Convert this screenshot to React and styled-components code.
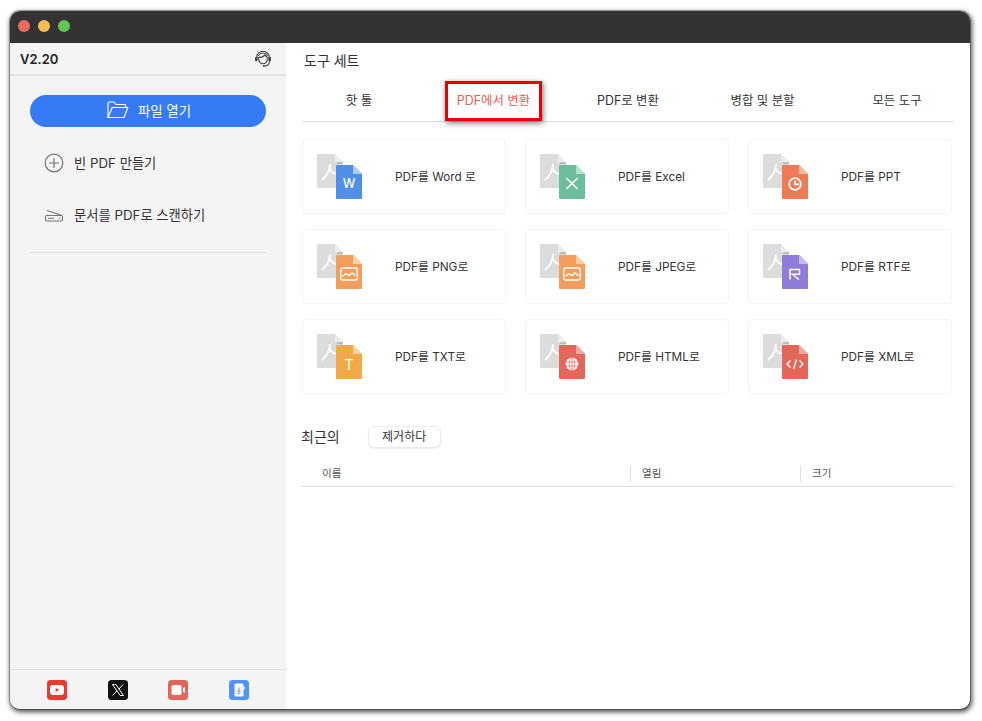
import React from 'react';
import styled, { createGlobalStyle } from 'styled-components';

const GlobalStyle = createGlobalStyle`
  html, body {
    margin: 0;
    padding: 0;
    background: #ffffff;
  }
  body {
    font-family: 'Inter', 'Noto Sans CJK KR', sans-serif;
    color: #333333;
  }
  * {
    box-sizing: border-box;
  }
`;

const Page = styled.div`
  width: 982px;
  height: 721px;
  padding: 11px 0 0 10px;
  overflow: hidden;
`;

const Window = styled.div`
  width: 960px;
  height: 698px;
  border-radius: 10px;
  overflow: hidden;
  display: flex;
  flex-direction: column;
  background: #ffffff;
  box-shadow: 0 0 0 1px rgba(0, 0, 0, 0.25), 1px 2px 5px 1px rgba(0, 0, 0, 0.7);
`;

const TitleBar = styled.div`
  height: 32px;
  flex: none;
  background: #333333;
  display: flex;
  align-items: center;
  gap: 8px;
  padding: 0 0 3px 8px;
`;

const Light = styled.span`
  width: 12px;
  height: 12px;
  border-radius: 50%;
  background: ${props => props.$color};
`;

const Body = styled.div`
  flex: 1;
  display: flex;
  min-height: 0;
`;

const Sidebar = styled.aside`
  width: 276px;
  flex: none;
  background: #f4f4f4;
  display: flex;
  flex-direction: column;
`;

const SideHeader = styled.div`
  height: 33px;
  flex: none;
  border-bottom: 2px solid #e2e2e2;
  display: flex;
  align-items: center;
  justify-content: space-between;
  padding: 0 14px 0 10px;
  font-size: 13px;
  font-weight: 600;
  color: #222222;
`;

const OpenButton = styled.button`
  width: 236px;
  height: 32px;
  margin: 19px 0 0 20px;
  border: 0;
  border-radius: 16px;
  background: #367bf5;
  color: #ffffff;
  font: inherit;
  font-size: 13.4px;
  display: flex;
  align-items: center;
  justify-content: center;
  gap: 9px;
  padding: 0 0 2px 2px;
`;

const SideList = styled.div`
  display: flex;
  flex-direction: column;
  gap: 32px;
  margin-top: 26px;
  padding-left: 34px;
`;

const SideItem = styled.div`
  height: 20px;
  display: flex;
  align-items: center;
  gap: 10px;
  font-size: 13.3px;
  color: #333333;
`;

const SideLabel = styled.span`
  position: relative;
  top: -1px;
`;

const SideDivider = styled.div`
  height: 1px;
  margin: 27px 20px 0;
  background: #dddddd;
`;

const SideFooter = styled.div`
  margin-top: auto;
  height: 40px;
  border-top: 1px solid #dedede;
  display: flex;
  align-items: flex-start;
  gap: 40.67px;
  padding: 10px 0 0 37px;
`;

const Main = styled.main`
  flex: 1;
  padding: 8px 16px 0;
  min-width: 0;
`;

const Title = styled.h1`
  margin: 0 0 0 2px;
  height: 20px;
  line-height: 20px;
  font-size: 14px;
  font-weight: 400;
  color: #333333;
`;

const TabRow = styled.div`
  position: relative;
  margin-top: 8px;
  height: 43px;
  width: 652px;
  border-bottom: 1px solid #dcdcdc;
  display: flex;
  justify-content: space-between;
`;

const Tab = styled.div`
  width: 114px;
  text-align: center;
  line-height: 44px;
  font-size: 12.4px;
  color: ${props => (props.$active ? '#e8604f' : '#333333')};
`;

const Highlight = styled.div`
  position: absolute;
  left: 143px;
  top: 2px;
  width: 97px;
  height: 40px;
  border: 3px solid #e80000;
  box-shadow: 1px 2px 6px rgba(0, 0, 0, 0.55);
`;

const ToolGrid = styled.div`
  display: grid;
  grid-template-columns: repeat(3, 204px);
  grid-auto-rows: 75px;
  gap: 15px 19px;
  margin-top: 17px;
`;

const ToolCard = styled.div`
  border: 1px solid #f4f4f4;
  border-radius: 4px;
  background: #ffffff;
  display: flex;
  align-items: center;
  padding-left: 14px;
  gap: 32px;
  font-size: 11.8px;
  color: #333333;
  white-space: nowrap;
`;

const ToolLabel = styled.span`
  position: relative;
  top: -1px;
`;

const RecentBar = styled.div`
  display: flex;
  align-items: center;
  height: 21px;
  margin: 32px 0 0 -1px;
  gap: 29px;
  font-size: 14px;
  line-height: 20px;
  color: #333333;
`;

const ClearButton = styled.button`
  width: 71px;
  height: 20px;
  border: 0;
  border-radius: 5px;
  background: #ffffff;
  box-shadow: 0 0 0 1px #ececec, 0 1px 2px rgba(0, 0, 0, 0.2);
  font: inherit;
  font-size: 12px;
  color: #333333;
  padding: 0 0 1px;
`;

const RecentHead = styled.div`
  display: grid;
  grid-template-columns: 329px 170px 1fr;
  width: 653px;
  height: 26px;
  margin: 14px 0 0 -1px;
  border-bottom: 1px solid #e2e2e2;
  align-items: center;
  font-size: 10.5px;
  color: #555555;
`;

const HeadCell = styled.div`
  height: 16px;
  line-height: 16px;
  padding-left: ${props => (props.$first ? '21px' : '11px')};
  border-left: ${props => (props.$first ? '0' : '1px solid #dddddd')};
`;

const FolderIcon = () => (
  <svg width="22" height="18" viewBox="0 0 22 18" fill="none" stroke="#fff" strokeWidth="1.2" strokeLinejoin="round">
    <path d="M1 16V2.500C1 1.700 1.600 1 2.500 1H7l2 2.500h8.500c.8 0 1.200.5 1.200 1.200V6" />
    <path d="M1 16.500h16l3.800-10H5.200L1 16.500z" />
  </svg>
);

const PlusIcon = () => (
  <svg width="20" height="20" viewBox="0 0 20 20" fill="none" stroke="#757575" strokeWidth="1.2">
    <circle cx="10" cy="10" r="8.800" />
    <path d="M10 5v10M5 10h10" />
  </svg>
);

const ScanIcon = () => (
  <svg width="20" height="20" viewBox="0 0 20 20" fill="none" stroke="#757575" strokeWidth="1.1" strokeLinejoin="round">
    <path d="M3 5.500l15 5" />
    <rect x="1.500" y="10.500" width="17" height="5.500" rx="1.200" />
    <path d="M4 13.300h6" />
    <path d="M15 13.300h1.500" />
  </svg>
);

const HeadsetIcon = () => (
  <svg width="18" height="18" viewBox="0 0 18 18" fill="none" stroke="#444" strokeWidth="1.1" strokeLinecap="round">
    <path d="M4.600 8.500c0 3 2 5.300 4.400 5.300s4.400-2.300 4.400-5.300" />
    <path d="M2.800 8V7C2.800 3.800 5.500 1.300 9 1.300s6.200 2.500 6.200 5.700v1" />
    <path d="M4.500 7.500C6.500 7.500 9.500 6.800 11 4.800c.6 1.200 1.500 2.300 2.500 2.700" />
    <path d="M4.500 5.500C5.500 3.800 7.200 3 9 3s3.500.8 4.500 2.500" />
    <rect x="1" y="6.800" width="2.600" height="4.600" rx="1.300" fill="#444" stroke="none" />
    <rect x="14.400" y="6.800" width="2.600" height="4.600" rx="1.300" fill="#444" stroke="none" />
    <path d="M15.500 11.200c0 2.700-2 4.600-5 4.800" />
    <circle cx="9.800" cy="16" r="1" fill="#444" stroke="none" />
  </svg>
);

const GlyphText = styled.text`
  font-family: 'Inter', sans-serif;
  fill: #ffffff;
`;

const renderGlyph = kind => {
  const line = { fill: 'none', stroke: '#fff', strokeWidth: 1.3 };
  switch (kind) {
    case 'word':
      return <GlyphText x="32" y="34" fontSize="12.500" fontWeight="500" textAnchor="middle">W</GlyphText>;
    case 'excel':
      return <path d="M26.500 24l11 11M37.500 24l-11 11" {...line} strokeWidth="1.600" />;
    case 'ppt':
      return (
        <g {...line} strokeWidth="1.800">
          <circle cx="32" cy="30" r="5.800" />
          <path d="M32 26.500v3.800h4" />
        </g>
      );
    case 'image':
      return (
        <g {...line}>
          <rect x="23.800" y="24" width="16.400" height="12" rx="1.400" />
          <path d="M25.500 32.500l3.500-3 3 2.200 3-3 3.500 3" />
        </g>
      );
    case 'rtf':
      return <path d="M27 35.500V25.500h9.500v4.800H29.500l6.500 5.200" {...line} strokeWidth="1.500" />;
    case 'txt':
      return <GlyphText x="32" y="36" fontSize="14" textAnchor="middle">T</GlyphText>;
    case 'html':
      return (
        <g>
          <circle cx="32" cy="30" r="6.400" fill="#fff" />
          <g fill="none" stroke="#e2665a" strokeWidth="0.7">
            <ellipse cx="32" cy="30" rx="2.800" ry="6.200" />
            <path d="M26 28h12M26 32h12M32 24v12" />
          </g>
        </g>
      );
    case 'xml':
      return <path d="M27.500 26.500L24 30l3.500 3.500M36.500 26.500L40 30l-3.500 3.500M33.500 25.500l-3 9.500" {...line} strokeWidth="1.400" />;
    default:
      return null;
  }
};

const FileIcon = ({ color, fold, kind }) => (
  <svg width="46" height="46" viewBox="0 0 46 46">
    <path d="M1 0h17l8 8v26H1a1 1 0 0 1-1-1V1a1 1 0 0 1 1-1z" fill="#dcdcdc" />
    <path d="M18 0l8 8h-8z" fill="#ededed" />
    <path d="M20 8.500h6v1.200h-6z" fill="#a8a8a8" />
    <path d="M5.500 25.500C9 22.500 12.500 17.500 13 11M13 15c1 3 3.500 4.500 7 5" fill="none" stroke="#fff" strokeWidth="2" strokeLinecap="round" />
    <path d="M20 11h16l9 9v24a1 1 0 0 1-1 1H20a1 1 0 0 1-1-1V12a1 1 0 0 1 1-1z" fill={color} />
    <path d="M36 11l9 9h-9z" fill={fold} />
    {renderGlyph(kind)}
  </svg>
);

const YoutubeIcon = () => (
  <svg width="20" height="20" viewBox="0 0 20 20">
    <rect width="20" height="20" rx="3.500" fill="#ea3a31" />
    <rect x="3" y="5" width="14" height="10" rx="3" fill="#fff" />
    <path d="M8.700 8l3.600 2-3.600 2z" fill="#ea3a31" />
  </svg>
);

const XIcon = () => (
  <svg width="20" height="20" viewBox="0 0 20 20">
    <rect width="20" height="20" rx="3.500" fill="#111111" />
    <path d="M4.500 4.500h3.400l7.600 11h-3.400zM15 4.500l-4.300 4.800M9 10.800l-4.300 4.700" fill="none" stroke="#fff" strokeWidth="1" />
  </svg>
);

const VideoIcon = () => (
  <svg width="20" height="20" viewBox="0 0 20 20">
    <rect width="20" height="20" rx="3.500" fill="#e2665a" />
    <rect x="3.500" y="5" width="10" height="10" rx="1.800" fill="#fff" />
    <path d="M15 8l2-.8v5.600l-2-.8z" fill="#fff" />
  </svg>
);

const TabletIcon = () => (
  <svg width="20" height="20" viewBox="0 0 20 20">
    <rect width="20" height="20" rx="3.500" fill="#4f93f8" />
    <rect x="5.500" y="3.500" width="9" height="13" rx="1.200" fill="#fff" />
    <path d="M14.500 6.500h1.200v3h-1.200z" fill="#fff" />
    <path d="M10 7.500v4.500M8.200 10.500L10 12.300l1.800-1.800" fill="none" stroke="#4f93f8" strokeWidth="1" />
    <path d="M8.500 13.500h3" stroke="#4f93f8" strokeWidth="0.8" />
  </svg>
);

const tabs = ['핫 툴', 'PDF에서 변환', 'PDF로 변환', '병합 및 분할', '모든 도구'];

const tools = [
  { label: 'PDF를 Word 로', color: '#4f8fe8', fold: '#a9cdf5', kind: 'word' },
  { label: 'PDF를 Excel', color: '#6bbd9e', fold: '#b7e0cf', kind: 'excel' },
  { label: 'PDF를 PPT', color: '#f07a55', fold: '#f7b9a4', kind: 'ppt' },
  { label: 'PDF를 PNG로', color: '#f39e5c', fold: '#f9cfa9', kind: 'image' },
  { label: 'PDF를 JPEG로', color: '#f39e5c', fold: '#f9cfa9', kind: 'image' },
  { label: 'PDF를 RTF로', color: '#917bd9', fold: '#c5b8ee', kind: 'rtf' },
  { label: 'PDF를 TXT로', color: '#f2a947', fold: '#f8d59e', kind: 'txt' },
  { label: 'PDF를 HTML로', color: '#e2665a', fold: '#f0aaa3', kind: 'html' },
  { label: 'PDF를 XML로', color: '#e2665a', fold: '#f0aaa3', kind: 'xml' },
];

export default function App() {
  return (
    <Page>
      <GlobalStyle />
      <Window>
        <TitleBar>
          <Light $color="#ee6a5f" />
          <Light $color="#f5bd4f" />
          <Light $color="#61c454" />
        </TitleBar>
        <Body>
          <Sidebar>
            <SideHeader>
              <span>V2.20</span>
              <HeadsetIcon />
            </SideHeader>
            <OpenButton>
              <FolderIcon />
              파일 열기
            </OpenButton>
            <SideList>
              <SideItem><PlusIcon /><SideLabel>빈 PDF 만들기</SideLabel></SideItem>
              <SideItem><ScanIcon /><SideLabel>문서를 PDF로 스캔하기</SideLabel></SideItem>
            </SideList>
            <SideDivider />
            <SideFooter>
              <YoutubeIcon />
              <XIcon />
              <VideoIcon />
              <TabletIcon />
            </SideFooter>
          </Sidebar>
          <Main>
            <Title>도구 세트</Title>
            <TabRow>
              {tabs.map((tab, i) => (
                <Tab key={tab} $active={i === 1}>{tab}</Tab>
              ))}
              <Highlight />
            </TabRow>
            <ToolGrid>
              {tools.map(tool => (
                <ToolCard key={tool.label}>
                  <FileIcon color={tool.color} fold={tool.fold} kind={tool.kind} />
                  <ToolLabel>{tool.label}</ToolLabel>
                </ToolCard>
              ))}
            </ToolGrid>
            <RecentBar>
              최근의
              <ClearButton>제거하다</ClearButton>
            </RecentBar>
            <RecentHead>
              <HeadCell $first>이름</HeadCell>
              <HeadCell>열림</HeadCell>
              <HeadCell>크기</HeadCell>
            </RecentHead>
          </Main>
        </Body>
      </Window>
    </Page>
  );
}
